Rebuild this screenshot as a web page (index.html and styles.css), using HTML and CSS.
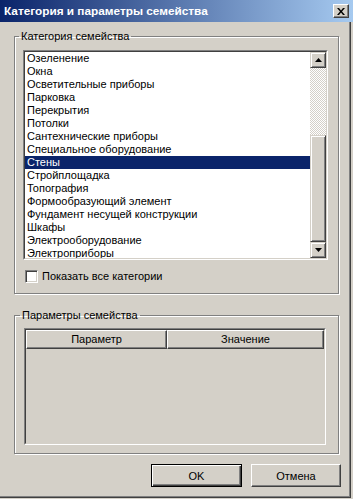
FILE: index.html
```html
<!DOCTYPE html>
<html lang="ru">
<head>
  <meta charset="UTF-8">
  <title>Категория и параметры семейства</title>
  <link rel="stylesheet" href="styles.css">
</head>
<body>
  <div class="window">
    <div class="titlebar">
      <span class="title">Категория и параметры семейства</span>
      <button class="close" aria-label="Закрыть">
        <svg width="8" height="7" viewBox="0 0 8 7"><path d="M0 0h2l2 2.5L6 0h2L5 3.5 8 7H6L4 4.5 2 7H0l3-3.5z" fill="#000"/></svg>
      </button>
    </div>

    <div class="content">
      <fieldset class="group group-cat">
        <legend>Категория семейства</legend>
        <div class="listbox">
          <div class="listbox-inner">
            <ul class="items">
              <li>Озеленение</li>
              <li>Окна</li>
              <li>Осветительные приборы</li>
              <li>Парковка</li>
              <li>Перекрытия</li>
              <li>Потолки</li>
              <li>Сантехнические приборы</li>
              <li>Специальное оборудование</li>
              <li class="selected">Стены</li>
              <li>Стройплощадка</li>
              <li>Топография</li>
              <li>Формообразующий элемент</li>
              <li>Фундамент несущей конструкции</li>
              <li>Шкафы</li>
              <li>Электрооборудование</li>
              <li>Электроприборы</li>
            </ul>
            <div class="scrollbar">
              <div class="sb-btn">
                <svg width="7" height="4" viewBox="0 0 7 4"><path d="M3.5 0L7 4H0z" fill="#000"/></svg>
              </div>
              <div class="sb-track"><div class="sb-thumb"></div></div>
              <div class="sb-btn">
                <svg width="7" height="4" viewBox="0 0 7 4"><path d="M0 0h7L3.5 4z" fill="#000"/></svg>
              </div>
            </div>
          </div>
        </div>
        <label class="check"><span class="box"></span>Показать все категории</label>
      </fieldset>

      <fieldset class="group group-params">
        <legend>Параметры семейства</legend>
        <div class="grid">
          <div class="grid-inner">
            <div class="grid-head">
              <div class="col col-name">Параметр</div>
              <div class="col col-value">Значение</div>
            </div>
            <div class="grid-body"></div>
          </div>
        </div>
      </fieldset>

      <div class="actions">
        <button class="btn btn-default">OK</button>
        <button class="btn">Отмена</button>
      </div>
    </div>
  </div>
</body>
</html>
```

FILE: styles.css
```css
body {
  margin: 0;
  background: #d4d0c8;
  font-family: "Liberation Sans", Arial, sans-serif;
  font-size: 11px;
  color: #000;
}

.window {
  width: 351px;
  height: 498px;
  box-sizing: border-box;
  background: #d4d0c8;
  box-shadow: inset -1px -1px #404040, inset -2px -2px #808080;
  display: flex;
  flex-direction: column;
}

.titlebar {
  height: 22px;
  width: 353px;
  display: flex;
  align-items: center;
  justify-content: space-between;
  padding: 0 4px 0 4px;
  box-sizing: border-box;
  background: linear-gradient(to right, #0a246a, #a6caf0);
}

.title {
  color: #fff;
  font-weight: bold;
  font-size: 11.8px;
}

.close {
  width: 16px;
  height: 14px;
  padding: 0;
  display: flex;
  align-items: center;
  justify-content: center;
  background: #d4d0c8;
  border: 1px solid;
  border-color: #fff #404040 #404040 #fff;
  box-shadow: inset -1px -1px #808080;
}

.content {
  padding: 8px 12px 0 14px;
}

.group {
  margin: 0;
  border: 1px solid #808080;
  box-shadow: inset 1px 1px #fff, 1px 1px #fff;
  min-width: 0;
}

.group legend {
  padding: 0 2px;
  margin-left: -4px;
  line-height: 13px;
}

.group-cat {
  padding: 7px 10px 10px 8px;
}

.listbox {
  border: 1px solid;
  border-color: #808080 #fff #fff #808080;
}

.listbox-inner {
  height: 206px;
  display: flex;
  border: 1px solid;
  border-color: #404040 #d4d0c8 #d4d0c8 #404040;
  background: #fff;
  overflow: hidden;
}

.items {
  list-style: none;
  margin: 0;
  padding: 0;
  flex: 1;
}

.items li {
  height: 13px;
  line-height: 13px;
  padding-left: 2px;
  white-space: nowrap;
}

.items li.selected {
  background: #0a246a;
  color: #fff;
}

.scrollbar {
  width: 16px;
  display: flex;
  flex-direction: column;
}

.sb-btn,
.sb-thumb {
  box-sizing: border-box;
  background: #d4d0c8;
  border: 1px solid;
  border-color: #d4d0c8 #404040 #404040 #d4d0c8;
  box-shadow: inset 1px 1px #fff, inset -1px -1px #808080;
}

.sb-btn {
  height: 16px;
  display: flex;
  align-items: center;
  justify-content: center;
}

.sb-track {
  flex: 1;
  display: flex;
  flex-direction: column;
  background: repeating-conic-gradient(#fff 0 25%, #d4d0c8 0 50%) 0 0 / 2px 2px;
}

.sb-thumb {
  margin-top: auto;
  height: 107px;
}

.check {
  display: flex;
  align-items: center;
  gap: 4px;
  margin: 10px 0 0 2px;
  line-height: 13px;
}

.check .box {
  width: 13px;
  height: 13px;
  box-sizing: border-box;
  background: #fff;
  border: 1px solid;
  border-color: #808080 #fff #fff #808080;
  box-shadow: inset 1px 1px #404040, inset -1px -1px #d4d0c8;
}

.group-params {
  margin-top: 15px;
  padding: 6px 12px 8px 9px;
}

.grid {
  border: 1px solid;
  border-color: #808080 #fff #fff #808080;
}

.grid-inner {
  height: 113px;
  border: 1px solid;
  border-color: #404040 #d4d0c8 #d4d0c8 #404040;
  display: flex;
  flex-direction: column;
}

.grid-head {
  display: flex;
  height: 19px;
}

.col {
  box-sizing: border-box;
  text-align: center;
  line-height: 17px;
  border: 1px solid;
  border-color: #fff #404040 #404040 #fff;
  box-shadow: inset -1px -1px #808080;
}

.col-name {
  width: 141px;
}

.col-value {
  flex: 1;
}

.grid-body {
  flex: 1;
}

.actions {
  display: flex;
  justify-content: flex-end;
  gap: 9px;
  margin: 10px -2px 0 0;
}

.btn {
  height: 23px;
  width: 90px;
  padding: 0;
  font: inherit;
  background: #d4d0c8;
  border: 1px solid;
  border-color: #fff #404040 #404040 #fff;
  box-shadow: inset -1px -1px #808080;
}

.btn-default {
  width: 91px;
  border: 1px solid #000;
  box-shadow: inset 1px 1px #fff, inset -1px -1px #404040, inset -2px -2px #808080;
}
```
